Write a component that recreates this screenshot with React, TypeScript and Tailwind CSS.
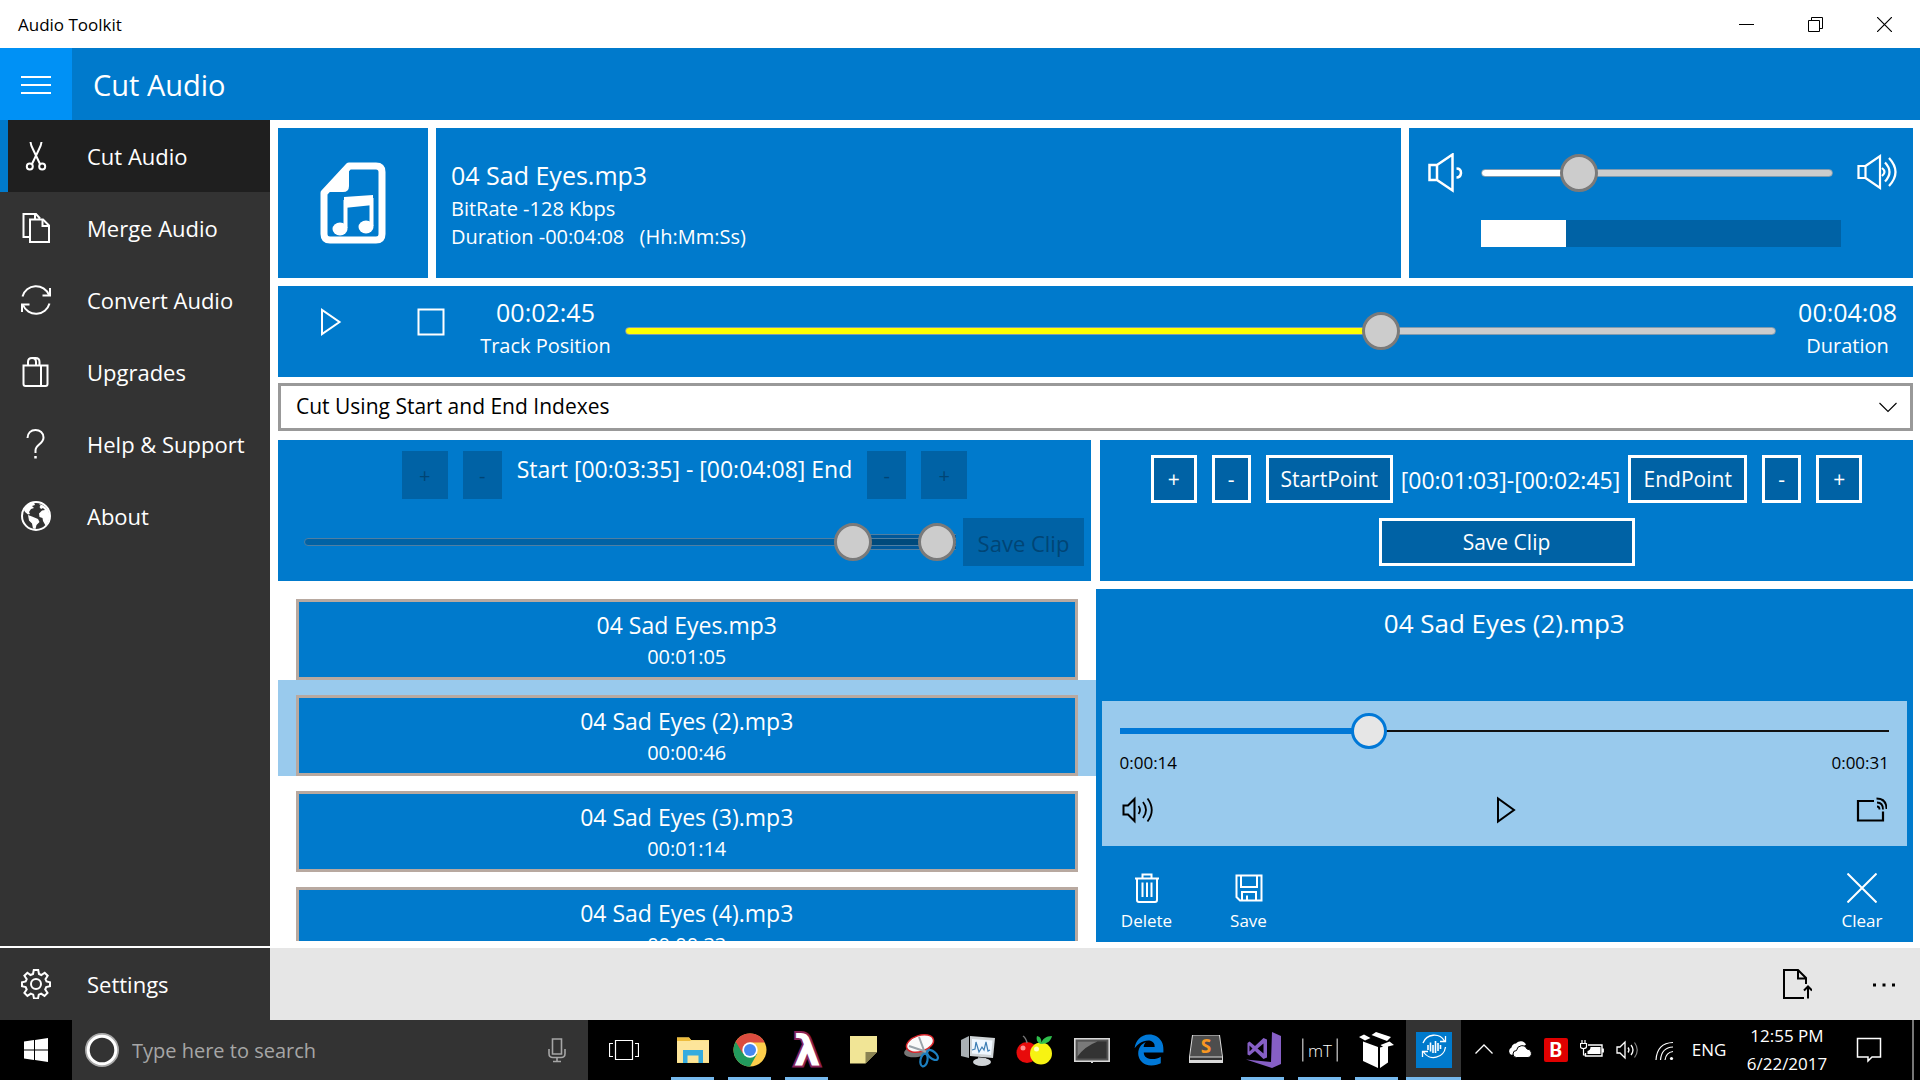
import { useState } from "react";
import type { ReactNode } from "react";
import { FaEdgeLegacy } from "react-icons/fa6";

type IconProps = { children: ReactNode; className?: string; box?: number };

function Icon({ children, className = "h-[30px] w-[30px]", box = 30 }: IconProps) {
  return (
    <svg
      viewBox={`0 0 ${box} ${box}`}
      className={className}
      fill="none"
      stroke="currentColor"
      strokeWidth="2"
      aria-hidden="true"
    >
      {children}
    </svg>
  );
}

const icons = {
  cut: (
    <Icon>
      <path d="M9.500 1c.3 3 1.500 5.500 2.600 7.500L19 23M20.500 1c-.3 3-1.500 5.500-2.600 7.500L11 23" />
      <circle cx="8.800" cy="25.500" r="3" />
      <circle cx="21.200" cy="25.500" r="3" />
    </Icon>
  ),
  merge: (
    <Icon>
      <path d="M9 24H2.500V1H15l4 4.500M9 6.500h13l6 6V29H9z" />
      <path d="M21.500 6.500V13H28M14 1v5" />
    </Icon>
  ),
  convert: (
    <Icon>
      <path d="M1.500 11.500A14 14 0 0 1 28 10M28.500 18.500A14 14 0 0 1 2 20" />
      <path d="M29 3v7.500h-7.500M1 27v-7.500h7.500" />
    </Icon>
  ),
  upgrades: (
    <Icon>
      <path d="M2.500 8.500h24V27q0 2-2 2h-20q-2 0-2-2zM20 8.500V29M7 8.500V5q0-4 4-4t4 4v3.500M11.500 1h3q4 0 4 4v3.500" />
    </Icon>
  ),
  help: (
    <Icon>
      <path d="M6.500 9C6.500 4 10 1 14.500 1s8 3 8 7.500c0 6.500-8 7-8 13V24" />
      <path d="M14.500 27v2.500" strokeWidth="2.500" />
    </Icon>
  ),
  about: (
    <Icon>
      <circle cx="15" cy="15" r="14" />
      <path
        fill="currentColor"
        stroke="none"
        d="M3 9C5 4 9 2 13 1.500l1 2.500-3 1 2 2-3 1-2 3 1 2-2 .5-3-2.500zM7 14l4 1.500 6 2.500 1.500 3-3 3-1 4-2.500-.5-1-5L8 19.500zM18 3c6 1 10.500 6 10.500 12 0 4-1.500 7-4 9.500L22 20l-.5-3-3-1-.5-3.500 3-3 3-.5-2-2-2 1-1.500-2 1-1.500z"
      />
    </Icon>
  ),
  settings: (
    <Icon>
      <path d="M12.800 1h4.400l.8 4 2.300 1 3.400-2.300 3 3-2.200 3.400 1 2.400 3.500.8v4l-3.800.8-1 2.400 2.300 3.400-3 3-3.400-2.300-2.300 1-.8 3.900h-4l-.8-3.900-2.400-1-3.400 2.300-3-3 2.300-3.400-1-2.400-3.700-.8v-4l3.700-.8 1-2.400-2.300-3.400 3-3L9.500 6l2.500-1z" />
      <circle cx="15" cy="15" r="5" />
    </Icon>
  ),
};

const navItems = [
  { label: "Cut Audio", icon: icons.cut },
  { label: "Merge Audio", icon: icons.merge },
  { label: "Convert Audio", icon: icons.convert },
  { label: "Upgrades", icon: icons.upgrades },
  { label: "Help & Support", icon: icons.help },
  { label: "About", icon: icons.about },
];

const clips = [
  { name: "04 Sad Eyes.mp3", length: "00:01:05" },
  { name: "04 Sad Eyes (2).mp3", length: "00:00:46" },
  { name: "04 Sad Eyes (3).mp3", length: "00:01:14" },
  { name: "04 Sad Eyes (4).mp3", length: "00:00:33" },
];

const thumb =
  "[&::-webkit-slider-thumb]:appearance-none [&::-webkit-slider-thumb]:rounded-full [&::-webkit-slider-thumb]:border-3 [&::-webkit-slider-thumb]:box-border";
const bigThumb =
  "[&::-webkit-slider-thumb]:size-[38px] [&::-webkit-slider-thumb]:border-[#7a7a7a] [&::-webkit-slider-thumb]:bg-[#cccccc]";
const thickTrack =
  "[&::-webkit-slider-thumb]:-mt-4 [&::-webkit-slider-runnable-track]:h-2 [&::-webkit-slider-runnable-track]:rounded-full [&::-webkit-slider-runnable-track]:border [&::-webkit-slider-runnable-track]:border-[#7f9bb0]";

const sliderStyles = {
  volume: `${bigThumb} ${thickTrack} h-[38px] [&::-webkit-slider-runnable-track]:bg-[linear-gradient(to_right,#ffffff_var(--fill),#cccccc_var(--fill))]`,
  track: `${bigThumb} ${thickTrack} h-[38px] [&::-webkit-slider-runnable-track]:bg-[linear-gradient(to_right,#ffff00_var(--fill),#cccccc_var(--fill))]`,
  player:
    "h-9 [&::-webkit-slider-thumb]:size-9 [&::-webkit-slider-thumb]:-mt-[15px] [&::-webkit-slider-thumb]:border-[#0078d7] [&::-webkit-slider-thumb]:bg-[#e6e6e6] [&::-webkit-slider-runnable-track]:h-1.5 [&::-webkit-slider-runnable-track]:bg-[linear-gradient(to_right,#0078d7_var(--fill),transparent_var(--fill)),linear-gradient(to_bottom,transparent_2px,#111111_2px,#111111_4px,transparent_4px)]",
};

type SliderProps = {
  label: string;
  initial: number;
  max: number;
  variant: keyof typeof sliderStyles;
};

function Slider({ label, initial, max, variant }: SliderProps) {
  const [value, setValue] = useState(initial);

  return (
    <input
      type="range"
      aria-label={label}
      min={0}
      max={max}
      step={0.1}
      value={value}
      onChange={(e) => setValue(Number(e.target.value))}
      style={{ "--fill": `${(value / max) * 100}%` } as React.CSSProperties}
      className={`block w-full min-w-0 appearance-none bg-transparent ${thumb} ${sliderStyles[variant]}`}
    />
  );
}

function RangeSlider({ start, end, max }: { start: number; end: number; max: number }) {
  const handle = `absolute inset-0 h-[38px] w-full appearance-none bg-transparent ${thumb} ${bigThumb}`;

  return (
    <div className="relative flex h-[38px] flex-1 items-center">
      <div className="h-2 w-full rounded-full border border-[#4f7fa3] bg-[#0062a5]" />
      <div
        className="absolute h-4 border-y border-[#4f7fa3] bg-[#00589a]"
        style={{ left: `${(start / max) * 100}%`, right: `${100 - (end / max) * 100}%` }}
      >
        <div className="mt-[3px] h-2 border-y border-[#4f7fa3] bg-[#004a7c]" />
      </div>
      <input type="range" aria-label="Clip start" disabled max={max} defaultValue={start} className={handle} />
      <input type="range" aria-label="Clip end" disabled max={max} defaultValue={end} className={handle} />
    </div>
  );
}

function TitleBar() {
  const button = "flex h-full w-[69px] items-center justify-center";

  return (
    <div className="flex h-12 shrink-0 items-center bg-white pl-[18px] pr-px text-black">
      <h1 className="flex-1 pt-px text-[17px]">Audio Toolkit</h1>
      <button aria-label="Minimize" className={button}>
        <Icon box={15} className="size-[15px]">
          <path d="M0 7.500h15" strokeWidth="1" />
        </Icon>
      </button>
      <button aria-label="Restore" className={button}>
        <Icon box={15} className="size-[15px]">
          <path d="M.5 3.500h11v11H.5zM3.500 3.500v-3h11v11h-3" strokeWidth="1" />
        </Icon>
      </button>
      <button aria-label="Close" className={button}>
        <Icon box={15} className="size-[15px]">
          <path d="M0 0l15 15M15 0L0 15" strokeWidth="1.200" />
        </Icon>
      </button>
    </div>
  );
}

function Sidebar() {
  return (
    <nav className="flex w-[270px] shrink-0 flex-col bg-[#333333] text-[22px]">
      {navItems.map((item, index) => (
        <button
          key={item.label}
          className={`flex h-[72px] items-center border-l-8 pl-[13px] ${
            index === 0 ? "border-[#007acc] bg-[#1f1f1f]" : "border-transparent"
          }`}
        >
          {item.icon}
          <span className="ml-9">{item.label}</span>
        </button>
      ))}
      <button className="mt-auto box-content flex h-[72px] items-center border-t-2 border-white pl-[21px]">
        {icons.settings}
        <span className="ml-9">Settings</span>
      </button>
    </nav>
  );
}

function FileInfo() {
  return (
    <section className="flex h-[150px] gap-2">
      <div className="flex w-[150px] items-center justify-center bg-[#007acc]">
        <svg viewBox="0 0 66 82" className="h-[82px] w-[66px]" fill="none" stroke="#fff" strokeWidth="7" aria-hidden="true">
          <path d="M29 4h27q6 0 6 6v62q0 6-6 6H10q-6 0-6-6V31z" strokeLinejoin="round" />
          <path d="M29 4v20q0 6-6 6H4z" fill="#fff" stroke="none" />
          <path d="M24 35l29-2v10l-29 3z" fill="#fff" stroke="none" />
          <path d="M25.500 38v28M51.500 36v28" strokeWidth="4" />
          <ellipse cx="20" cy="67" rx="7.500" ry="6.500" fill="#fff" stroke="none" />
          <ellipse cx="46" cy="65" rx="7.500" ry="6.500" fill="#fff" stroke="none" />
        </svg>
      </div>

      <div className="flex flex-1 flex-col justify-center bg-[#007acc] pl-[15px] pt-1">
        <h2 className="mb-1 text-[25px] leading-8">04 Sad Eyes.mp3</h2>
        <p className="text-xl leading-7">BitRate -128 Kbps</p>
        <p className="text-xl leading-7">
          Duration -00:04:08 <span className="ml-2.5">(Hh:Mm:Ss)</span>
        </p>
      </div>

      <div className="w-[504px] bg-[#007acc] px-4 pt-[25px]">
        <div className="flex items-center">
          <Icon box={40} className="size-10 shrink-0">
            <path d="M4.500 12h7.500v15H4.500zM12 12L27.500 1.500v36L12 27M31.500 15.500q4.500 0 4.500 4.500-.5 4.500-4.500 4.500" strokeWidth="2.500" />
          </Icon>
          <div className="mx-4 flex-1">
            <Slider label="Volume" initial={25} max={100} variant="volume" />
          </div>
          <Icon box={40} className="ml-2 size-10 shrink-0">
            <path d="M1.500 13h7v12h-7zM8.500 13L23 3v32L8.500 25" strokeWidth="2.200" />
            <path d="M25 15q5 4 0 8M28 9.500q9 9.500 0 19M32 5q13 14 0 28" strokeWidth="2.200" />
          </Icon>
        </div>
        <div className="mt-[27px] px-14">
          <progress
            aria-label="Level"
            value={23.6}
            max={100}
            className="block h-[27px] w-full appearance-none [&::-webkit-progress-bar]:bg-[#0062a5] [&::-webkit-progress-value]:bg-white"
          />
        </div>
      </div>
    </section>
  );
}

function Transport() {
  return (
    <section className="flex h-[91px] bg-[#007acc]">
      <button aria-label="Play" className="flex h-[72px] w-[102px] items-center justify-center">
        <Icon box={28} className="size-7">
          <path d="M7 2v24L24.500 14z" />
        </Icon>
      </button>
      <button aria-label="Stop" className="flex h-[72px] w-[102px] items-center justify-center">
        <Icon box={28} className="size-7">
          <path d="M1.500 1.500h25v25h-25z" />
        </Icon>
      </button>
      <div className="w-[127px] whitespace-nowrap pt-2 text-center">
        <p className="text-[25px] leading-9">00:02:45</p>
        <p className="-mx-2 text-xl leading-8">Track Position</p>
      </div>
      <div className="ml-4 mr-[22px] flex-1 pt-[26px]">
        <Slider label="Track position" initial={164.2} max={248} variant="track" />
      </div>
      <div className="mr-4 pt-2 text-center">
        <p className="text-[25px] leading-9">00:04:08</p>
        <p className="text-xl leading-8">Duration</p>
      </div>
    </section>
  );
}

function ModeSelect() {
  return (
    <div className="relative mt-1.5">
      <select
        aria-label="Cut mode"
        className="block h-12 w-full appearance-none border-3 border-[#999999] bg-white px-[15px] text-[21px] text-black"
      >
        <option>Cut Using Start and End Indexes</option>
      </select>
      <Icon box={18} className="pointer-events-none absolute right-4 top-4 size-[18px] text-black">
        <path d="M.5 4L9 12.500 17.500 4" strokeWidth="1.100" />
      </Icon>
    </div>
  );
}

function CutPanels() {
  const disabled = "h-12 bg-[#0062a5] pt-0.5 text-[#004575]";
  const outlined = "h-12 border-3 border-white bg-[#0062a5] pt-0.5 text-[21px]";

  return (
    <section className="mt-[9px] grid grid-cols-2 gap-[9px]">
      <div className="flex h-[141px] flex-col bg-[#007acc] pt-[11px]">
        <div className="flex justify-center gap-[15px]">
          <button disabled aria-label="Start forward" className={`${disabled} w-[46px] text-xl`}>+</button>
          <button disabled aria-label="Start back" className={`${disabled} w-[39px] text-xl`}>-</button>
          <p className="whitespace-nowrap text-[23px] leading-9">Start [00:03:35] - [00:04:08] End</p>
          <button disabled aria-label="End back" className={`${disabled} w-[39px] text-xl`}>-</button>
          <button disabled aria-label="End forward" className={`${disabled} w-[46px] text-xl`}>+</button>
        </div>
        <div className="mt-[19px] flex items-center gap-[7px] pl-[26px] pr-[7px]">
          <RangeSlider start={214} end={248} max={248} />
          <button disabled className={`${disabled} w-[121px] text-[22px]`}>Save Clip</button>
        </div>
      </div>

      <div className="flex h-[141px] flex-col items-center gap-[15px] bg-[#007acc] pt-[15px]">
        <div className="flex items-center gap-[15px]">
          <button aria-label="Start point forward" className={`${outlined} w-[46px]`}>+</button>
          <button aria-label="Start point back" className={`${outlined} w-[39px]`}>-</button>
          <div className="flex items-center gap-2">
            <button className={`${outlined} w-[127px]`}>StartPoint</button>
            <p className="whitespace-nowrap pt-0.5 text-[23px]">[00:01:03]-[00:02:45]</p>
            <button className={`${outlined} w-[119px]`}>EndPoint</button>
          </div>
          <button aria-label="End point back" className={`${outlined} w-[39px]`}>-</button>
          <button aria-label="End point forward" className={`${outlined} w-[46px]`}>+</button>
        </div>
        <button className={`${outlined} w-64`}>Save Clip</button>
      </div>
    </section>
  );
}

function ClipList() {
  const [selected, setSelected] = useState(1);

  return (
    <ul className="mb-px mt-[3px] overflow-hidden">
      {clips.map((clip, index) => (
        <li key={clip.name} className={`px-[18px] pt-[15px] ${index === selected ? "bg-[#99caed]" : ""}`}>
          <button
            onClick={() => setSelected(index)}
            className="block h-[81px] w-full border-3 border-[#b8a9a0] bg-[#007acc] pt-0.5 text-center"
          >
            <span className="block text-[23px] leading-8">{clip.name}</span>
            <span className="block text-xl leading-8">{clip.length}</span>
          </button>
        </li>
      ))}
    </ul>
  );
}

function Player() {
  const action = "flex w-[102px] flex-col items-center text-[17px] leading-6";

  return (
    <section className="mt-2 flex flex-col bg-[#007acc] px-1.5">
      <h2 className="pt-4 text-center text-[26px] leading-9">04 Sad Eyes (2).mp3</h2>

      <div className="mt-[60px] h-[145px] shrink-0 bg-[#99caed] px-[18px] pt-3 text-black">
        <Slider label="Clip position" initial={14.2} max={45} variant="player" />
        <div className="mt-0.5 flex justify-between text-[17px] leading-6">
          <span>0:00:14</span>
          <span>0:00:31</span>
        </div>
        <div className="mt-[18px] flex items-center justify-between">
          <button aria-label="Mute" className="w-9">
            <Icon className="size-[34px]" box={34}>
              <path d="M3.500 12.500h4.500L14.500 6v22L8 21.500H3.500z" />
              <path d="M18.500 13q3 4 0 8M23 9q6 8 0 16M27.500 5.500q8.500 11.500 0 23" strokeWidth="1.800" />
            </Icon>
          </button>
          <button aria-label="Play clip" className="w-9">
            <Icon className="size-[34px]" box={34}>
              <path d="M12 5.500v23L28 17z" />
            </Icon>
          </button>
          <button aria-label="Cast" className="w-9">
            <Icon className="size-[34px]" box={34}>
              <path d="M21 8H5v19.500h25V18.500" strokeWidth="2.200" />
              <path d="M24 13.500q2.500 0 2.500 3M24 9.500q6 0 6 7M23.500 5.500q10 0 10 10.500" strokeWidth="1.800" />
            </Icon>
          </button>
        </div>
      </div>

      <div className="mt-[27px] flex">
        <button className={`${action} -ml-1.5`}>
          <Icon>
            <path d="M3 5.500h24M10.500 5V1.500h9V5M5 5.500V27q0 2 2 2h16q2 0 2-2V5.500M10.500 9.500V24M15 9.500V24M19.500 9.500V24" />
          </Icon>
          <span className="mt-1.5">Delete</span>
        </button>
        <button className={action}>
          <Icon>
            <path d="M2.500 2.500h25v25H6l-3.500-3.500zM7 2.500V14h16V2.500M8 27.500V19h14v8.500M13 27.500V22.500" />
          </Icon>
          <span className="mt-1.5">Save</span>
        </button>
        <button className={`${action} -mr-1.5 ml-auto`}>
          <Icon>
            <path d="M.5.500l29 29M29.500.500l-29 29" />
          </Icon>
          <span className="mt-1.5">Clear</span>
        </button>
      </div>
    </section>
  );
}

function CommandBar() {
  return (
    <div className="flex h-[72px] shrink-0 items-center justify-end bg-[#e6e6e6] text-black">
      <button aria-label="Open file" className="flex w-[102px] justify-center">
        <Icon>
          <path d="M22 29H2V1h14l8 8v6M16 1v8.500h8M26 29.500V18M22 21.500l4-4 4 4" />
        </Icon>
      </button>
      <button aria-label="More" className="flex w-[72px] justify-center">
        <Icon box={24} className="size-6">
          <path d="M1 13h3M10.500 13h3M20 13h3" strokeWidth="3" />
        </Icon>
      </button>
    </div>
  );
}

const taskApps = [
  {
    name: "File Explorer",
    running: true,
    art: (
      <>
        <path d="M2 5.500h12l2 2.500h18V31H2z" fill="#f9df85" />
        <path d="M2 5.500h12l2 2.500-2 2H2z" fill="#eebc3c" />
        <path d="M2 9h32v21H2z" fill="#fde59a" />
        <path d="M8 18h20v13h-4.500v-7.500h-11V31H8z" fill="#35abde" />
      </>
    ),
  },
  {
    name: "Chrome",
    running: true,
    art: (
      <>
        <circle cx="18" cy="18" r="16.500" fill="#fdce4b" />
        <path d="M18 18L3.700 9.800A16.500 16.500 0 0 0 18 34.500l7-12.500z" fill="#229b5d" />
        <path d="M3.700 9.800A16.500 16.500 0 0 1 32.700 10.500H18L10.500 21z" fill="#db4c3f" />
        <circle cx="18" cy="18" r="7.700" fill="#fff" />
        <circle cx="18" cy="18" r="6" fill="#4688f1" />
      </>
    ),
  },
  {
    name: "Lambda",
    running: true,
    art: (
      <text x="18" y="34" textAnchor="middle" fontFamily="DejaVu Sans" fontWeight="700" fontSize="43" fill="#fff" stroke="#8a2257" strokeWidth="4" paintOrder="stroke">
        λ
      </text>
    ),
  },
  {
    name: "Sticky Notes",
    running: false,
    art: (
      <>
        <path d="M4 4h27v16L19.500 31.500H4z" fill="#f1e596" />
        <path d="M19.500 31.500V20H31z" fill="#8a8353" />
      </>
    ),
  },
  {
    name: "Snipping Tool",
    running: false,
    art: (
      <>
        <ellipse cx="14" cy="19" rx="13" ry="6" fill="#777" transform="rotate(-10 14 19)" />
        <ellipse cx="17" cy="11.500" rx="14" ry="8" fill="#fafafa" stroke="#d8262b" strokeWidth="1.500" transform="rotate(-18 17 11.500)" />
        <path d="M6 14l18 6M16 5l6 16" stroke="#9aa3aa" strokeWidth="2" />
        <g fill="none" stroke="#1c7fc0" strokeWidth="2.200">
          <ellipse cx="21" cy="28" rx="3.500" ry="6.500" transform="rotate(12 21 28)" />
          <ellipse cx="29.500" cy="23" rx="3.500" ry="6.500" transform="rotate(-50 29.500 23)" />
        </g>
      </>
    ),
  },
  {
    name: "Performance Monitor",
    running: false,
    art: (
      <>
        <path d="M1 8l8-4v22l-8-2z" fill="#a9b0b4" />
        <path d="M10 4l25 2-2 20-23-2z" fill="#cfd4d7" />
        <path d="M12 7l20.500 1.500L31 23l-19-1.500z" fill="#f0f8ff" />
        <path d="M12 18l3-1 1-7 3 10 3-5 2 3 2-8 2 9 2-1" fill="none" stroke="#3f7fb5" strokeWidth="1.200" />
        <path d="M18 25l8 1v3h-8z" fill="#8d9296" />
        <ellipse cx="22" cy="30" rx="9" ry="4" fill="#cfd3d6" />
      </>
    ),
  },
  {
    name: "Apples",
    running: false,
    art: (
      <>
        <circle cx="10" cy="20.500" r="10.500" fill="#e80b0b" />
        <circle cx="6" cy="16" r="2.500" fill="#ff8f8f" />
        <circle cx="24" cy="21.500" r="11" fill="#f7f312" />
        <circle cx="19.500" cy="17" r="2.500" fill="#ffffb8" />
        <path d="M24 12c-4-1-5-5-4-8 4 1 5 4 4 8 1-5 5-8 11-8-1 5-5 8-11 8z" fill="#2fbf4c" />
        <path d="M6 4q3 2 4 7" fill="none" stroke="#777" strokeWidth="1.500" />
      </>
    ),
  },
  {
    name: "Display",
    running: false,
    art: (
      <>
        <path d="M.8 6.800h34.400v22.400H.8z" fill="#555" stroke="#d8d8d8" strokeWidth="1.600" />
        <path d="M3.500 9.500h29v17h-29z" fill="#333" />
        <path d="M3.500 9.500h20q-13 5-20 15z" fill="#999" opacity=".7" />
        <path d="M17 29h2v2h-2z" fill="#d8d8d8" />
      </>
    ),
  },
  { name: "Edge", running: false, art: null },
  {
    name: "Sublime Text",
    running: false,
    art: (
      <>
        <path d="M4 3h28l3 22v6H1v-6z" fill="#dadada" />
        <path d="M5 3.500h26l3 21H2z" fill="#4d4d4d" />
        <path d="M2 25.500h32v2.500H2z" fill="#333" />
        <text x="18" y="20.500" textAnchor="middle" fontFamily="Open Sans" fontWeight="700" fontSize="19" fill="#f89822">
          S
        </text>
      </>
    ),
  },
  {
    name: "Visual Studio",
    running: true,
    art: (
      <g fill="#865fc5">
        <path d="M27 0l9 4v28l-9 4L1 27.500 26 30z" />
        <path d="M2.500 11l2-1.500L10 14l8.500-8 3.500 1.500v18L18.500 27 10 19l-5.500 4.500-2-1z" />
        <path d="M4.500 13.500v6L7.500 16.500zM12.500 16.500l6 5v-10z" fill="#000" />
      </g>
    ),
  },
  {
    name: "mT",
    running: true,
    art: (
      <>
        <path d="M.8 6.500v23M35.200 6.500v23" stroke="#d0d0d0" strokeWidth="1.200" />
        <text x="18" y="24.500" textAnchor="middle" fontFamily="Open Sans" fontWeight="300" fontSize="17" fill="#fff">
          mT
        </text>
      </>
    ),
  },
  {
    name: "Package",
    running: true,
    art: (
      <g fill="#fff">
        <path d="M4 9.500L19 15v21L4 29zM21 15.500l8-2v17L21 36z" />
        <path d="M0 5l5-2.500L11.500 6 6 8.500zM12.500 3L17 0l15 5-4 4zM21.500 13l9-3.500 4.500 3.500-10 2.500z" />
      </g>
    ),
  },
  {
    name: "Audio Toolkit",
    running: true,
    art: (
      <>
        <path d="M0 0h36v36H0z" fill="#007acc" />
        <g fill="none" stroke="#fff" strokeWidth="1.300">
          <path d="M7 11A12 12 0 0 1 28.500 9M29.500 4v5.500H24M29.500 15A12 12 0 0 1 7.500 20M6.500 25v-5.500H12" />
          <path d="M12 13v5M14.500 10.500v9M17 13v8M19.500 9v12M22 11v8M24.500 13v4" strokeWidth="1.600" />
        </g>
      </>
    ),
  },
];

function Tray() {
  const cell = "flex h-full w-9 items-center justify-center";

  return (
    <div className="ml-auto flex h-full shrink-0 items-center text-[17px]">
      <button aria-label="Show hidden icons" className={cell}>
        <Icon box={24} className="size-6">
          <path d="M3.500 15.500L12 7l8.500 8.500" strokeWidth="1.300" />
        </Icon>
      </button>
      <button aria-label="OneDrive" className={cell}>
        <Icon box={24} className="size-6">
          <path d="M4 17a4 4 0 0 1-.5-7.500A5 5 0 0 1 8 5.500a6 6 0 0 1 10 1l-4 3-6 4z" fill="currentColor" stroke="none" />
          <path d="M8.500 19.500a3.500 3.500 0 0 1 0-7 5.500 5.500 0 0 1 10.500-1.500 4.300 4.300 0 0 1 1 8.500z" fill="currentColor" stroke="#000" strokeWidth="1" />
        </Icon>
      </button>
      <button aria-label="Bitdefender" className={cell}>
        <span className="flex size-6 items-center justify-center rounded-xs bg-[#e00000] font-['Roboto'] text-xl font-bold">
          B
        </span>
      </button>
      <button aria-label="Battery" className={cell}>
        <Icon box={24} className="size-6">
          <path d="M8 7h14v11H5.500v-3M23.200 10.500v4" strokeWidth="1.400" />
          <path d="M10.500 9h10v7H7.500v-3q3-.5 3-4z" fill="currentColor" stroke="none" />
          <path d="M.5 5.500h6v3q0 2-3 2t-3-2zM2 5.500V2M5 5.500V2M3.500 10.500V17H6" strokeWidth="1.200" />
        </Icon>
      </button>
      <button aria-label="Volume" className={cell}>
        <Icon box={24} className="size-6">
          <path d="M1 9h3l5-5v16l-5-5H1zM12 9.500q2 2.500 0 5M15 7q4 5 0 10" strokeWidth="1.300" />
          <path d="M18.500 4.500q5.500 7.500 0 15" strokeWidth="1.200" opacity=".5" />
        </Icon>
      </button>
      <button aria-label="Network" className={cell}>
        <Icon box={24} className="size-6">
          <path d="M4 22Q5 5 21 4.500M8.500 22Q9.500 9.500 21 9M13 22q1-7.500 8-8.500" strokeWidth="1.200" />
          <circle cx="19.500" cy="20.500" r="1.600" fill="currentColor" stroke="none" />
        </Icon>
      </button>
      <button className="w-[54px]">ENG</button>
      <button className="w-[102px] text-center leading-7">
        12:55 PM
        <br />
        6/22/2017
      </button>
      <button aria-label="Action center" className="flex w-[62px] justify-center">
        <Icon box={26} className="size-[26px]">
          <path d="M1.500 1.500h23V20H16l-4 4v-4H1.500z" strokeWidth="1.500" />
        </Icon>
      </button>
      <button aria-label="Show desktop" className="ml-3 h-full w-2 border-l-2 border-[#777777]" />
    </div>
  );
}

function Taskbar() {
  return (
    <div className="flex h-[60px] shrink-0 items-center bg-black">
      <button aria-label="Start" className="flex w-[72px] justify-center">
        <svg viewBox="0 0 24 24" className="size-6" fill="#fff" aria-hidden="true">
          <path d="M0 3.400l10-1.300v9.400H0zM11 2l13-2v11.500H11zM0 12.500h10V22L0 20.600zM11 12.500h13V24l-13-1.900z" />
        </svg>
      </button>

      <label className="flex h-full w-[516px] items-center bg-[#333333] px-[13px] text-[#a6a6a6]">
        <svg viewBox="0 0 34 34" className="size-[34px] shrink-0" fill="none" aria-hidden="true">
          <circle cx="17" cy="17" r="15.500" stroke="#aaa" strokeWidth="3" />
          <circle cx="17" cy="17" r="13.800" stroke="#fff" strokeWidth="3" />
        </svg>
        <input
          type="text"
          aria-label="Search"
          placeholder="Type here to search"
          className="ml-[13px] min-w-0 flex-1 bg-transparent pt-0.5 text-[20px] outline-none placeholder:text-[#a6a6a6]"
        />
        <Icon box={26} className="mr-[5px] size-[26px]">
          <path d="M8.500 2h9v15h-9zM5 12v4.500q0 4 4 4h8q4 0 4-4V12M13 20.500V24M9 24.500h8" strokeWidth="1.600" />
        </Icon>
      </label>

      <button aria-label="Task view" className="mr-[5px] flex w-[72px] justify-center">
        <Icon box={30} className="size-[30px]">
          <path d="M6.500 5.500h17v19h-17zM4 8.500H.5v13H4M26 8.500h3.500v13H26" strokeWidth="1.200" />
        </Icon>
      </button>

      <div className="flex h-full gap-0.5">
        {taskApps.map((app) => {
          const active = app.name === "Audio Toolkit";
          return (
            <button
              key={app.name}
              aria-label={app.name}
              className={`flex h-full w-[55px] flex-col items-center ${active ? "bg-[#333333]" : ""}`}
            >
              <span className="flex flex-1 items-center pt-[3px]">
                {app.art ? (
                  <svg viewBox="0 0 36 36" className="size-9 overflow-visible" aria-hidden="true">
                    {app.art}
                  </svg>
                ) : (
                  <FaEdgeLegacy className="size-8 text-[#0078d7]" />
                )}
              </span>
              <span
                className={`h-[3px] ${active ? "w-full" : "w-[43px]"} ${app.running ? "bg-[#76b9ed]" : ""}`}
              />
            </button>
          );
        })}
      </div>

      <Tray />
    </div>
  );
}

export default function App() {
  return (
    <div className="flex h-screen flex-col overflow-hidden bg-white font-['Open_Sans',sans-serif] text-white">
      <TitleBar />

      <header className="flex h-[72px] shrink-0 items-center bg-[#007acc]">
        <button aria-label="Menu" className="flex h-full w-[72px] items-center justify-center bg-[#0091f5]">
          <Icon>
            <path d="M0 8h30M0 16h30M0 24h30" />
          </Icon>
        </button>
        <h2 className="ml-[21px] pt-0.5 text-[29px]">Cut Audio</h2>
      </header>

      <div className="flex min-h-0 flex-1">
        <Sidebar />
        <div className="flex min-w-0 flex-1 flex-col">
          <main className="flex min-h-0 flex-1 flex-col pb-1.5 pl-2 pr-[7px] pt-2">
            <FileInfo />
            <div className="mt-2">
              <Transport />
            </div>
            <ModeSelect />
            <CutPanels />
            <div className="grid min-h-0 flex-1 grid-cols-2 grid-rows-[minmax(0,1fr)]">
              <ClipList />
              <Player />
            </div>
          </main>
          <CommandBar />
        </div>
      </div>

      <Taskbar />
    </div>
  );
}
